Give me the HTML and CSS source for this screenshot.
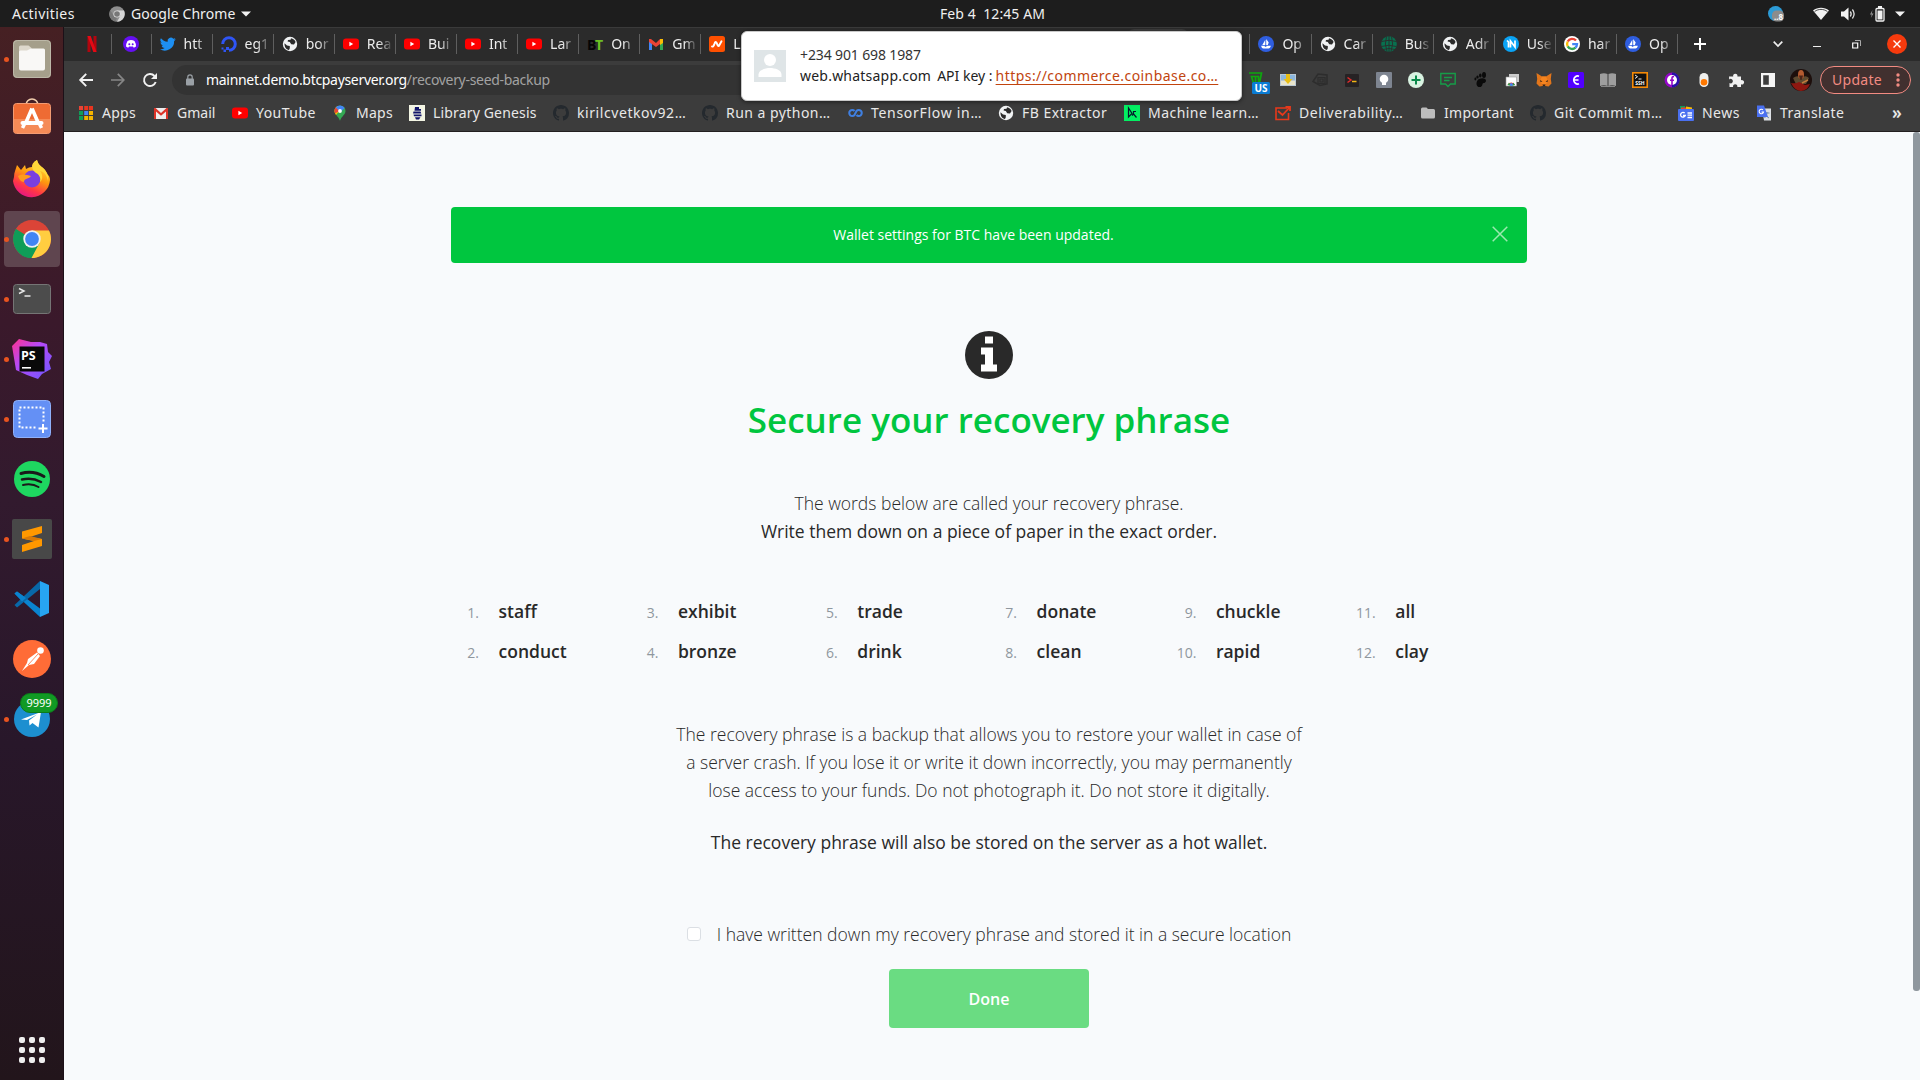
FILE: index.html
```html
<!DOCTYPE html>
<html lang="en">
<head>
<meta charset="utf-8">
<title>Secure your recovery phrase</title>
<link rel="stylesheet" href="styles.css">
</head>
<body>
<svg class="defs" width="0" height="0" aria-hidden="true">
  <symbol id="yt" viewBox="0 0 16 16"><rect y="2.5" width="16" height="11" rx="3" fill="#f00"/><path d="M6.4 5.8v4.4L10.2 8z" fill="#fff"/></symbol>
  <symbol id="globe" viewBox="0 0 16 16"><circle cx="8" cy="8" r="7.2" fill="#f1f3f4"/><path d="M2.5 7.2 5 9.4 7.8 10v2.2L7 14C4.300 13.600 2.300 11 2.500 7.200zM9 2.200c2 .3 3.900 1.700 4.600 3.800L12 8.600l-2.800-.4L7.800 6l-2.200-.4L6 4l2.600-.2z" fill="#2b2b2b"/></symbol>
  <symbol id="gh" viewBox="0 0 16 16"><path fill="#24292e" fill-rule="evenodd" d="M8 0C3.580 0 0 3.580 0 8c0 3.540 2.290 6.530 5.470 7.590.4.070.55-.17.55-.38 0-.19-.01-.82-.01-1.490-2.010.37-2.530-.49-2.690-.94-.09-.23-.48-.94-.82-1.130-.28-.15-.68-.52-.01-.53.63-.01 1.080.58 1.230.82.72 1.210 1.870.87 2.330.66.070-.52.28-.87.51-1.070-1.780-.2-3.640-.89-3.640-3.950 0-.87.31-1.590.82-2.150-.08-.2-.36-1.020.08-2.120 0 0 .67-.21 2.200.82.64-.18 1.320-.27 2-.27s1.360.09 2 .27c1.530-1.040 2.200-.82 2.200-.82.44 1.100.16 1.920.08 2.120.51.56.82 1.270.82 2.150 0 3.070-1.870 3.750-3.650 3.950.29.25.54.73.54 1.480 0 1.070-.01 1.930-.01 2.200 0 .21.15.46.55.38A8.010 8.010 0 0 0 16 8c0-4.420-3.580-8-8-8z"/></symbol>
  <symbol id="sea" viewBox="0 0 16 16"><circle cx="8" cy="8" r="8" fill="#2f5ee0"/><path d="M7.300 3.800v5.200H4.300zM8.200 3l2.500 3.600L9.800 9H8.200zM3.200 9.800h3.600v.9h1.600v-.9h4.400c-.4 1.900-1.200 2.700-2.300 2.700H5.300c-1.100 0-1.800-1-2.100-2.700z" fill="#fff"/></symbol>
  <symbol id="goo" viewBox="0 0 16 16"><circle cx="8" cy="8" r="8" fill="#fff"/><g fill="none" stroke-width="2.300"><path d="M12 4.600A5 5 0 0 0 3.700 5.600" stroke="#ea4335"/><path d="M3.700 5.600a5 5 0 0 0 0 4.800" stroke="#fbbc05"/><path d="M3.700 10.400A5 5 0 0 0 11.500 11.600" stroke="#34a853"/><path d="M11.400 11.700A5 5 0 0 0 13 8.200H8.200" stroke="#4285f4"/></g></symbol>
</svg>

<header class="topbar">
  <span class="activities">Activities</span>
  <span class="appmenu">
    <svg width="16" height="16" viewBox="0 0 16 16"><circle cx="8" cy="8" r="7.800" fill="#8d8d8d"/><path d="M8 4.500h7A8 8 0 0 1 8 15.800l3.400-6z" fill="#d4d4d4"/><path d="M1.200 4.200 5 10l3 1.500L6.500 15.600A8 8 0 0 1 1.200 4.200z" fill="#777"/><circle cx="8" cy="8" r="3.600" fill="#ddd"/><circle cx="8" cy="8" r="2.800" fill="#777"/></svg>
    <span class="t-chrome">Google Chrome</span>
    <svg width="10" height="6" viewBox="0 0 10 6"><path d="M0 .5h10L5 5.500z" fill="#f2f2f2"/></svg>
  </span>
  <span class="clock">Feb 4&nbsp; 12:45 AM</span>
  <span class="tray">
    <svg width="16" height="16" viewBox="0 0 16 16"><circle cx="7.500" cy="7.500" r="7.500" fill="#2c9bd6"/><rect x="4" y="4.500" width="12" height="11" rx="4.500" fill="#8c8c8c"/><text x="6" y="13.500" class="tiny">..8</text></svg>
    <svg class="wifi" width="16" height="13" viewBox="0 0 16 13"><path d="M0 3.500C4.500-.2 11.500-.2 16 3.500L8 13z" fill="#f2f2f2"/><path d="M1.600 4.500C5.500 1.700 10.500 1.700 14.400 4.500" stroke="#1d1d1d" stroke-width=".8" fill="none"/></svg>
    <svg class="vol" width="16" height="14" viewBox="0 0 16 14"><path d="M0 4.500h3L7.500.5v13L3 9.500H0z" fill="#f2f2f2"/><path d="M9.300 4.500q1.800 2.500 0 5M11.400 2.500q3.400 4.500 0 9" stroke="#ddd" stroke-width="1.300" fill="none"/></svg>
    <svg class="bat" width="16" height="16" viewBox="0 0 16 16"><path d="M3.500 4 1 8.500h1.800L1.800 12l2.700-4.500H2.700z" fill="#999"/><rect x="7" y="2.500" width="8" height="12.500" rx="1" fill="none" stroke="#f2f2f2" stroke-width="1.300"/><path d="M9 0h4v2H9zM8.500 4.500h5v9h-5z" fill="#f2f2f2"/></svg>
    <svg class="car" width="10" height="6" viewBox="0 0 10 6"><path d="M0 .5h10L5 5.500z" fill="#f2f2f2"/></svg>
  </span>
</header>

<div class="desktop">
  <nav class="dock">
    <div class="app run"><svg viewBox="0 0 40 40"><rect x="1" y="1" width="38" height="38" rx="4" fill="#a59f8b"/><rect x="1.500" y="1.500" width="37" height="37" rx="4" fill="none" stroke="#bdb8a8"/><path d="M7 8q0-1.500 1.500-1.500h8L19.500 9V18H7z" fill="#ddd8cc"/><path d="M7 13q0-1.500 1.500-1.500H15L19 9.500h12.500Q33 9.500 33 11v18.500q0 2-2 2H9q-2 0-2-2z" fill="#f9f8f6"/></svg></div>
    <div class="app"><svg viewBox="0 0 40 40"><path d="M14 6a6 6 0 0 1 12 0" fill="none" stroke="#f2cfae" stroke-width="1.600"/><rect x="1.500" y="4.500" width="37" height="30" rx="3" fill="#ee6b33" stroke="#f39b72"/><path d="M2 20h36v12q0 2-2 2H4q-2 0-2-2z" fill="#f58b57"/><path d="M20 9.500l-6.500 15M20 9.500l6.500 15" stroke="#fff" stroke-width="3.600" fill="none"/><rect x="8.500" y="22" width="23" height="4" rx="2" fill="#fff"/><path d="M12.500 25 10.500 29M27.500 25l2 4" stroke="#fff" stroke-width="3.500"/></svg></div>
    <div class="app"><svg viewBox="0 0 40 40"><defs><linearGradient id="ff" x1=".8" y1="0" x2=".3" y2="1"><stop offset="0" stop-color="#fff14a"/><stop offset=".45" stop-color="#ff980e"/><stop offset=".75" stop-color="#ff3647"/><stop offset="1" stop-color="#e31587"/></linearGradient></defs><path d="M2 18C2 13 4 10 5 6l4 5 4-5 1 4q3-2 6-2c0-4 3-6 5-7l2 6c5 1 7 5 8 8q3 2 3 6A18.600 18.600 0 0 1 1 22z" fill="url(#ff)"/><circle cx="20" cy="20" r="8.500" fill="#7a3fe0"/><path d="M6 17c5-3 9-1 13 0-2 3-7 2-7 6-3 0-5-3-6-6z" fill="#ff9a1c"/><path d="M25 1c-7 5-5 10-1 13 4 2 5 6 4 9 3-2 3-8 0-11 5 1 7 5 8 10 2-12-9-13-11-21z" fill="#ffd83a"/></svg></div>
    <div class="app run active"><svg viewBox="0 0 40 40"><circle cx="20" cy="20" r="19" fill="#db4437"/><path d="M4 10a19 19 0 0 0 15.500 29L28 25z" fill="#0f9d58"/><path d="M4 10 13 25h14L19.500 39C5 39-3 23 4 10z" fill="#0f9d58"/><path d="M20 11.500h17A19 19 0 0 1 19.500 39L27.500 24z" fill="#ffcd40"/><circle cx="20" cy="20" r="8.700" fill="#f1f1f1"/><circle cx="20" cy="20" r="6.900" fill="#4285f4"/></svg></div>
    <div class="app run"><svg viewBox="0 0 40 40"><rect x="1.500" y="5.500" width="37" height="29" rx="3" fill="#4c4c4c" stroke="#757575"/><path d="M7 9.500l5 2.500-5 2.500M12.500 17h6" stroke="#e6e6e6" stroke-width="1.500" fill="none"/></svg></div>
    <div class="app run"><svg viewBox="0 0 40 40"><defs><linearGradient id="ps" x1="0" y1="0" x2="1" y2="1"><stop offset="0" stop-color="#ff318c"/><stop offset=".4" stop-color="#b74af7"/><stop offset="1" stop-color="#6b57ff"/></linearGradient></defs><path d="M0 7 7 0l12 3h9l7 2 1 8 4 4-3 6 2 7-9 5-4 5-11-4-11-5z" fill="url(#ps)"/><rect x="7.500" y="7.500" width="25" height="25" fill="#090909"/><text x="9" y="20.500" class="pstext">PS</text><path d="M10 28h9v1.600h-9z" fill="#fff"/></svg></div>
    <div class="app run"><svg viewBox="0 0 40 40"><rect x="1.500" y="1.500" width="37" height="37" rx="4" fill="#6490f5" stroke="#8fb0fa"/><rect x="7.500" y="8.500" width="24" height="20" fill="none" stroke="#fff" stroke-width="2" stroke-dasharray="2 2"/><path d="M25 23h8v8h-8z" fill="#6490f5"/><path d="M31 25v9M26.500 29.500h9" stroke="#fff" stroke-width="2"/></svg></div>
    <div class="app"><svg viewBox="0 0 40 40"><circle cx="20" cy="20" r="18" fill="#1ed760"/><g fill="none" stroke="#1a1a1a" stroke-linecap="round"><path d="M9 14.500q12-3.500 23 3" stroke-width="3"/><path d="M10 20.500q10-2.500 19 2.500" stroke-width="2.500"/><path d="M11 26q9-2 15.500 2" stroke-width="2"/></g></svg></div>
    <div class="app run"><svg viewBox="0 0 40 40"><rect width="40" height="40" rx="2" fill="#484848"/><path d="M10 12.500 30 7v7l-12 4 12 2v7L10 33v-7l12-4-12-2.500z" fill="#ff9800"/><path d="M10 19.500 22 22l8-2-12-3z" fill="#d97a06"/></svg></div>
    <div class="app"><svg viewBox="0 0 40 40"><path d="M2.500 14.500 5 12.500l23 17V38z" fill="#0a84d0"/><path d="M2.500 26 28 2v8L5 28.500z" fill="#0868a8"/><path d="M2.500 14.500 5 12.500l9 6.500-4 3.500z" fill="#0a84d0"/><path d="M28 2l9 4v28l-9 4z" fill="#27a5f2"/></svg></div>
    <div class="app"><svg viewBox="0 0 40 40"><circle cx="20" cy="20" r="19" fill="#ff6c37"/><circle cx="28.500" cy="11.500" r="3.300" fill="#fff"/><path d="M25 13.500 28 17l-6 8-5 1-7 6 5-8 1-4z" fill="#fff"/><path d="m26 15-10 11" stroke="#ff6c37" stroke-width=".8"/></svg></div>
    <div class="app run"><svg viewBox="0 0 40 40"><circle cx="20" cy="20" r="18" fill="#1d8fd0"/><path d="M9 20.500 29 13l-2.500 15.500-6-4.500-3 2.500-.5-5 8-6-10 5.500z" fill="#fff"/></svg><span class="badge">9999</span></div>
    <div class="grid9"><svg width="26" height="26" viewBox="0 0 26 26" fill="#eee"><rect x="0" y="0" width="6" height="6" rx="2"/><rect x="10" y="0" width="6" height="6" rx="2"/><rect x="20" y="0" width="6" height="6" rx="2"/><rect x="0" y="10" width="6" height="6" rx="2"/><rect x="10" y="10" width="6" height="6" rx="2"/><rect x="20" y="10" width="6" height="6" rx="2"/><rect x="0" y="20" width="6" height="6" rx="2"/><rect x="10" y="20" width="6" height="6" rx="2"/><rect x="20" y="20" width="6" height="6" rx="2"/></svg></div>
  </nav>

  <main class="browser">
    <div class="tabs">
      <div class="tab pin first"><svg class="ic" viewBox="0 0 16 16"><path d="M3.500 0h3v16h-3zM9.500 0h3v16h-3z" fill="#b1060f"/><path d="M3.500 0h3.200l5.800 16H9.300z" fill="#e50914"/></svg></div>
      <div class="tab pin"><svg class="ic" viewBox="0 0 16 16"><circle cx="8" cy="8" r="8" fill="#6610f2"/><path d="M4.500 5q3.500-1.800 7 0 1.600 2.500 1.500 5.500l-2.200 1.300-.8-1.300H6l-.8 1.300L3 10.500Q3 7.500 4.500 5z" fill="#fff"/><circle cx="6.300" cy="8.200" r="1" fill="#6610f2"/><circle cx="9.700" cy="8.200" r="1" fill="#6610f2"/></svg></div>
      <div class="tab"><svg class="ic twitter" viewBox="0 0 24 24"><path fill="#1d8ff2" d="M23.600 4.900c-.9.400-1.800.7-2.800.8 1-.6 1.800-1.600 2.200-2.700-1 .6-2 1-3.100 1.200a4.900 4.900 0 0 0-8.400 4.500C7.400 8.500 3.800 6.500 1.400 3.500a4.900 4.900 0 0 0 1.500 6.600c-.8 0-1.600-.2-2.200-.6 0 2.300 1.600 4.400 3.900 4.900-.7.200-1.500.2-2.200.1.600 2 2.400 3.400 4.600 3.400A9.900 9.900 0 0 1 0 19.900 14 14 0 0 0 21.200 7.400c1-.7 1.800-1.500 2.400-2.500z"/></svg><span>htt</span></div>
      <div class="tab"><svg class="ic" viewBox="0 0 16 16"><path d="M8 14.300A6.300 6.300 0 1 0 1.700 8" fill="none" stroke="#2f55f5" stroke-width="3"/><path d="M5 11h3v3H5zM2.500 13.500H5V16H2.500zM.5 11.500h2v2h-2z" fill="#2f55f5"/></svg><span>eg1</span></div>
      <div class="tab"><svg class="ic"><use href="#globe"/></svg><span>bor</span></div>
      <div class="tab"><svg class="ic"><use href="#yt"/></svg><span>Rea</span></div>
      <div class="tab"><svg class="ic"><use href="#yt"/></svg><span>Bui</span></div>
      <div class="tab"><svg class="ic"><use href="#yt"/></svg><span>Int</span></div>
      <div class="tab"><svg class="ic"><use href="#yt"/></svg><span>Lar</span></div>
      <div class="tab"><svg class="ic" viewBox="0 0 16 16"><text x="0" y="13.500" class="bt"><tspan fill="#050505">B</tspan><tspan fill="#6cc024" x="8">T</tspan></text></svg><span>On</span></div>
      <div class="tab"><svg class="ic" viewBox="0 0 16 16"><path d="M1 4h3v10H1z" fill="#4285f4"/><path d="M12 4h3v10h-3z" fill="#34a853"/><path d="M12 3h3v4l-3 2z" fill="#fbbc04"/><path d="M1 3h2l5 4 4-4v5l-4 3-7-5z" fill="#ea4335"/></svg><span>Gm</span></div>
      <div class="tab"><svg class="ic" viewBox="0 0 16 16"><rect width="16" height="16" rx="2.500" fill="#ff5000"/><path d="M3 10.500q1 .5 2-1.500l1-2.500q.6-1 1.400 0l1.400 3q.8 1.200 1.500-.2l2.200-4" fill="none" stroke="#fff" stroke-width="1.900" stroke-linecap="round"/></svg><span>L</span></div>
      <div class="behind"><i></i></div>
      <div class="tab"><svg class="ic"><use href="#sea"/></svg><span>Op</span></div>
      <div class="tab"><svg class="ic"><use href="#globe"/></svg><span>Car</span></div>
      <div class="tab"><svg class="ic" viewBox="0 0 16 16"><circle cx="8" cy="8" r="7.800" fill="#08704f"/><path d="M.5 5.500q7.500-2.500 15 0M.3 10.500q7.500-2.500 15 0M2 13.500q6-2 12 0M5.500.5q-2.500 7.500.5 15M10.500.5q2.500 7.500-.5 15M8 0v16" stroke="#2b2b2b" stroke-width=".9" fill="none"/></svg><span>Bus</span></div>
      <div class="tab"><svg class="ic"><use href="#globe"/></svg><span>Adr</span></div>
      <div class="tab"><svg class="ic" viewBox="0 0 16 16"><circle cx="8" cy="8" r="8" fill="#0aa3f5"/><path d="M4 4.500 5.500 6v5.500M7.500 11.500V5l4.500 6V4.500" fill="none" stroke="#fff" stroke-width="1.700"/></svg><span>Use</span></div>
      <div class="tab"><svg class="ic"><use href="#goo"/></svg><span>har</span></div>
      <div class="tab"><svg class="ic"><use href="#sea"/></svg><span>Op</span></div>
      <div class="newtab"><svg width="12" height="12" viewBox="0 0 12 12"><path d="M6 0v12M0 6h12" stroke="#fff" stroke-width="2"/></svg></div>
      <div class="winctl">
        <svg width="10" height="6" viewBox="0 0 10 6"><path d="M.7.7 5 5 9.300.7" stroke="#eee" stroke-width="1.700" fill="none"/></svg>
        <svg class="min" width="8" height="8" viewBox="0 0 8 8"><path d="M0 6.500h8" stroke="#eee" stroke-width="1"/></svg>
        <svg class="max" width="9" height="9" viewBox="0 0 9 9"><path d="M.7 3h5v5h-5z" stroke="#fff" stroke-width="1.200" fill="none"/><path d="M3 .5h5.500V6" stroke="#aaa" fill="none"/></svg>
        <svg class="cls" width="20" height="20" viewBox="0 0 20 20"><circle cx="10" cy="10" r="10" fill="#f63a0d"/><path d="m6.500 6.500 7 7m0-7-7 7" stroke="#fff" stroke-width="1.400"/></svg>
      </div>
    </div>

    <div class="toolbar">
      <svg class="back" width="14" height="14" viewBox="0 0 14 14"><path d="M14 7H1.500M7.200.8 1.200 7l6 6.200" stroke="#f1f1f1" stroke-width="1.900" fill="none"/></svg>
      <svg class="fwd" width="14" height="14" viewBox="0 0 14 14"><path d="M0 7h12.500M6.800.8 12.800 7l-6 6.200" stroke="#868686" stroke-width="1.700" fill="none"/></svg>
      <svg class="rel" width="14" height="14" viewBox="0 0 14 14"><path d="M12.700 9A6 6 0 1 1 11.500 3" stroke="#f1f1f1" stroke-width="1.900" fill="none"/><path d="M14 0v6H8z" fill="#f1f1f1"/></svg>
      <div class="omni">
        <svg width="8" height="12" viewBox="0 0 8 12"><rect y="4.500" width="8" height="7" rx="1" fill="#9aa0a6"/><path d="M1.800 5V3a2.200 2.200 0 0 1 4.400 0v2" stroke="#9aa0a6" stroke-width="1.200" fill="none"/></svg>
        <span class="host">mainnet.demo.btcpayserver.org</span><span class="path">/recovery-seed-backup</span>
      </div>
      <div class="exts">
        <svg class="ic us" viewBox="0 0 16 16"><path d="M1 1h12.500l-2 10H5.500L3.500 4.500h7V10M7.500 4.500V10" fill="none" stroke="#0da80d" stroke-width="1.700"/><rect x="4" y="10" width="18" height="12" rx="1.500" fill="#0a7cd4"/><text x="6.500" y="20" class="ustext">US</text></svg>
        <svg class="ic" viewBox="0 0 16 16"><rect y="2" width="16" height="12" fill="#b9c8d4"/><rect x="1" y="3" width="14" height="5" fill="#8bb6dc"/><path d="M1 9h14v4H1z" fill="#e8e4cc"/><path d="M6 2h4v5h2.500L8 12 3.500 7H6z" fill="#e7bd15"/></svg>
        <svg class="ic" viewBox="0 0 16 16"><path d="M1 9.500 6 2l9 1v9l-7 1.500z" fill="none" stroke="#2d2d2d" stroke-width="1.500"/><path d="M6 5.500h7v6H6zM8 7h3v3H8z" fill="none" stroke="#2d2d2d" stroke-width="1.200"/></svg>
        <svg class="ic" viewBox="0 0 16 16"><rect x="1" y="2" width="14" height="13" rx="1" fill="#262224"/><path d="m3.500 5.500 3.500 2.500-3.500 2.500" stroke="#e22b2b" stroke-width="1.500" fill="none"/><path d="M8 9.500h4.500" stroke="#f2b515" stroke-width="1.500"/></svg>
        <svg class="ic" viewBox="0 0 16 16"><rect width="16" height="16" rx="1" fill="#7e8591"/><circle cx="8" cy="7" r="4.300" fill="#fff"/><path d="M6 10h4v3H6z" fill="#fff"/></svg>
        <svg class="ic" viewBox="0 0 16 16"><circle cx="8" cy="8" r="8" fill="#d9f3e2"/><path d="M8 3.500v9M3.500 8h9" stroke="#0b8a4b" stroke-width="2"/></svg>
        <svg class="ic" viewBox="0 0 16 16"><path d="M.8 1.500h14.400v10.500H10.500L8 14.500 5.500 12H.8z" fill="none" stroke="#169c48" stroke-width="1.400"/><path d="M4 5.500h8M4 8.500h5.500" stroke="#169c48" stroke-width="1.300"/></svg>
        <svg class="ic" viewBox="0 0 16 16" fill="#0a0a0a"><path d="M7 7c4-1.500 7-.5 7 2-.5 2.500-3 1.500-3.500 3 0 3-3 3.800-4.800 2.500C4 13 4 9 7 7z"/><ellipse cx="12" cy="3" rx="2" ry="3"/><ellipse cx="8.300" cy="3.500" rx="1.300" ry="2"/><ellipse cx="5.500" cy="5" rx="1.200" ry="1.600"/><ellipse cx="3.400" cy="7" rx="1" ry="1.400"/></svg>
        <svg class="ic" viewBox="0 0 16 16"><path d="M5 2h10v8H5z" fill="#ccc"/><path d="M2 5h10.500v9H2z" fill="#fff" stroke="#999" stroke-width=".6"/><path d="M3.500 13a4 4 0 0 1 7.500 0z" fill="#e8342a"/><path d="M3.500 13 5 10.500 7 14zM11 13 9.500 10.500 8 14z" fill="#2a9b48"/><circle cx="7.300" cy="12.500" r="1.500" fill="#4285f4"/></svg>
        <svg class="ic" viewBox="0 0 16 16"><path d="M.5 1 6 4.500h4L15.500 1l-.7 6 .7 4.500-3 3-3-.5h-3l-3 .5-3-3L1.200 7z" fill="#e2761b"/><path d="M6 4.500h4L12 9l-2 3H6L4 9z" fill="#f5841f"/><path d="m4 8 2.500 1.500L4.500 10zM12 8 9.500 9.500l2 .5zM6.500 12.500h3L9 14H7z" fill="#3a2618"/></svg>
        <svg class="ic" viewBox="0 0 16 16"><rect width="16" height="16" rx="1.500" fill="#5200ff"/><path d="M11 4.200A4 4 0 1 0 11 11.800M5 8h5.500" fill="none" stroke="#fff" stroke-width="1.700"/></svg>
        <svg class="ic" viewBox="0 0 16 16"><path d="M0 2q4-1.500 7.500 0v12Q4 12.500 0 14zM16 2q-4-1.500-7.500 0v12q3.500-1.500 7.500 0z" fill="#9e9e9e"/><path d="M1 14.500h14" stroke="#888"/></svg>
        <svg class="ic" viewBox="0 0 16 16"><rect x=".8" y=".8" width="14.400" height="14.400" fill="#111" stroke="#f58a07" stroke-width="1.600"/><path d="m3 3 2.500 1.700L3 6.500M6.500 7h3" stroke="#eee" fill="none"/><text x="3.300" y="13" class="ssh">SSH</text></svg>
        <svg class="ic" viewBox="0 0 16 16"><circle cx="8" cy="8" r="7.500" fill="#9407c8"/><path d="M8 .5a7.500 7.500 0 0 1 0 15z" fill="#2711a8"/><circle cx="8" cy="8" r="5" fill="#fff"/><path d="M10 4.800q-2-.6-2 1.500V13M6 8.300h4" stroke="#9407c8" stroke-width="1.600" fill="none"/></svg>
        <svg class="ic" viewBox="0 0 16 16"><rect x="3.500" y="1" width="9" height="14" rx="4.500" fill="#f0f0ee"/><circle cx="8" cy="10.300" r="3.300" fill="#ff7800"/></svg>
        <svg class="ic" viewBox="0 0 16 16"><path d="M1 4.500h4.200a2.200 2.200 0 1 1 4.200 0H13v3.800a2.200 2.200 0 1 1 0 4V15H9.300a2.200 2.200 0 1 0-4.200 0H1.500v-4a2.200 2.200 0 1 0-.3-3.500z" fill="#f1f1f1"/></svg>
        <svg class="ic" viewBox="0 0 16 16"><path d="M1 1h14v14H1zM3.200 3.200v9.600h5.600V3.200z" fill="#f5f5f5" fill-rule="evenodd"/></svg>
      </div>
      <svg class="ava" width="22" height="22" viewBox="0 0 22 22"><circle cx="11" cy="11" r="11" fill="#1d0f0c"/><path d="M3 9q4-3 6-1l2 3 2-3q3-2 6 1l-3 6H6z" fill="#5d4a30"/><ellipse cx="11" cy="5.500" rx="3" ry="4.500" fill="#b35a30"/><path d="M1 14q5 1 8-1l6 3 5-1q-3 7-9 7t-10-8z" fill="#8e1710"/><path d="M9 6.500h4l-1 4h-2z" fill="#4a2418"/><path d="m12 14 6-3" stroke="#c07a3c" stroke-width="1.500"/></svg>
      <div class="update"><span>Update</span><svg width="4" height="14" viewBox="0 0 4 14" fill="#f28b82"><circle cx="2" cy="2" r="1.700"/><circle cx="2" cy="7" r="1.700"/><circle cx="2" cy="12" r="1.700"/></svg></div>
    </div>

    <div class="marks">
      <a><svg class="ic" viewBox="0 0 16 16"><path d="M1 1h4v4H1z" fill="#ea4335"/><path d="M6.200 1h4v4h-4zM11 1h4v4h-4z" fill="#e8351f"/><path d="M1 6h4v4H1z" fill="#0f9d58"/><path d="M6.200 6h4v4h-4z" fill="#4285f4"/><path d="M11 6h4v4h-4z" fill="#f4b400"/><path d="M1 11h4v4H1z" fill="#0f9d58"/><path d="M6.200 11h4v4h-4zM11 11h4v4h-4z" fill="#f4b400"/></svg><span class="w3">Apps</span></a>
      <a><svg class="ic" viewBox="0 0 16 16"><path d="M1 3h14v11H1z" fill="#eee"/><path d="M1 3h1.500L8 8l5.500-5H15v11h-2V6.500l-5 4.300-5-4.300V14H1z" fill="#dc3429"/></svg><span>Gmail</span></a>
      <a><svg class="ic"><use href="#yt"/></svg><span class="w5">YouTube</span></a>
      <a><svg class="ic" viewBox="0 0 16 16"><path d="M8 .5a5.500 5.500 0 0 1 5.500 5.500c0 4-4 5-5.500 9.800C6.500 11 2.500 10 2.500 6A5.500 5.500 0 0 1 8 .5z" fill="#34a853"/><path d="M2.500 6c0 1.500.7 2.800 1.500 4l6-7.200L6 1A5.500 5.500 0 0 0 2.500 6z" fill="#fbbc04"/><path d="M8 6 3.800 2.500A5.500 5.500 0 0 0 3 8.300z" fill="#ea4335"/><path d="M3.800 2.500A5.500 5.500 0 0 1 12.700 3L8.500 7z" fill="#4285f4"/><circle cx="8" cy="6" r="1.900" fill="#fff"/></svg><span class="w3">Maps</span></a>
      <a><svg class="ic" viewBox="0 0 16 16"><path d="M0 0h16v16H0z" fill="#f3f5e4"/><path d="M6 2h4v2h2v1.800H5.500zM4.500 6.500h7l.8 2H4zM4.500 9.500h8v1.800H5zM6 12.300h5.500L10 14.500H7z" fill="#12156b"/></svg><span class="w1">Library Genesis</span></a>
      <a><svg class="ic"><use href="#gh"/></svg><span class="w6">kirilcvetkov92…</span></a>
      <a><svg class="ic"><use href="#gh"/></svg><span class="w5">Run a python…</span></a>
      <a><svg class="ic" viewBox="0 0 16 16"><path d="M7.500 6A3 3 0 1 0 7.500 10L9.500 6A3 3 0 1 1 9.500 10" fill="none" stroke="#3f7fe0" stroke-width="2.100"/></svg><span class="w7">TensorFlow in…</span></a>
      <a><svg class="ic"><use href="#globe"/></svg><span class="w5">FB Extractor</span></a>
      <a><svg class="ic" viewBox="0 0 16 16"><path d="M0 0h16v16H0z" fill="#03ef62"/><path d="M4.500 3v9L8 8.500zM12 6.500H9.500V9l3 3.500M9.500 9 8 10.500" fill="none" stroke="#05192d" stroke-width="1.200"/></svg><span class="w5">Machine learn…</span></a>
      <a><svg class="ic" viewBox="0 0 16 16"><path d="M12 3H1v11.500h12.500V8" fill="none" stroke="#e8391b" stroke-width="1.600"/><path d="m3 6 4.500 4L14 3M10.500 2H15v4" fill="none" stroke="#e8391b" stroke-width="1.800"/></svg><span class="w6">Deliverability…</span></a>
      <a><svg class="ic" viewBox="0 0 16 16"><path d="M1 4q0-1.500 1.500-1.500h4L8 4h5.500Q15 4 15 5.500V12q0 1.500-1.500 1.500h-11Q1 13.500 1 12z" fill="#bdbdbd"/></svg><span class="w3">Important</span></a>
      <a><svg class="ic"><use href="#gh"/></svg><span class="w5">Git Commit m…</span></a>
      <a><svg class="ic" viewBox="0 0 16 16"><path d="M2 1h5v5H2z" fill="#0c9d58"/><path d="M3 2.500h8V6H3z" fill="#ea4335"/><path d="M8 1.500l6 1V6H8z" fill="#fbbc04"/><rect y="4" width="16" height="12" rx="1" fill="#4a70f0"/><path d="M6.700 8A2.400 2.400 0 1 0 7.300 10.500H5M9.500 8h4.500M9.500 10.200h4.500M9.500 12.500h4.500" stroke="#fff" stroke-width="1.300" fill="none"/></svg><span class="w5">News</span></a>
      <a><svg class="ic" viewBox="0 0 16 16"><path d="M6 3.500h9v12H8z" fill="#dcdfe4"/><path d="M8.500 8h5M11 7v1q0 3-2.500 5M9.500 9q1 3 3.500 4" stroke="#6d8ba8" fill="none"/><path d="M1 .5h7L12 12H1z" fill="#4a70f0"/><path d="M7 5A2.200 2.200 0 1 0 7.500 7H5.500" stroke="#fff" stroke-width="1.100" fill="none"/></svg><span class="w5">Translate</span></a>
      <b>»</b>
    </div>

    <section class="page">
      <div class="content">
        <div class="alert"><span>Wallet settings for BTC have been updated.</span><svg width="16" height="16" viewBox="0 0 16 16"><path d="m.7.700 14.600 14.600M15.300.7.7 15.300" stroke="#9be9b0" stroke-width="1.500"/></svg></div>
        <svg class="info" width="48" height="48" viewBox="0 0 48 48"><circle cx="24" cy="24" r="24" fill="#292929"/><path d="M20 5.500h8v7h-8zM16 16.500h12v17h4v7H16v-7h4v-10h-4z" fill="#fff"/></svg>
        <h1>Secure your recovery phrase</h1>
        <p class="lead">The words below are called your recovery phrase.<br><strong>Write them down on a piece of paper in the exact order.</strong></p>
        <ol class="words">
          <li><i>1.</i>staff</li><li><i>2.</i>conduct</li>
          <li><i>3.</i>exhibit</li><li><i>4.</i>bronze</li>
          <li><i>5.</i>trade</li><li><i>6.</i>drink</li>
          <li><i>7.</i>donate</li><li><i>8.</i>clean</li>
          <li><i>9.</i>chuckle</li><li><i>10.</i>rapid</li>
          <li><i>11.</i>all</li><li><i>12.</i>clay</li>
        </ol>
        <p class="warn">The recovery phrase is a backup that allows you to restore your wallet in case of<br>a server crash. If you lose it or write it down incorrectly, you may permanently<br>lose access to your funds. Do not photograph it. Do not store it digitally.</p>
        <p class="hot"><strong>The recovery phrase will also be stored on the server as a hot wallet.</strong></p>
        <label class="confirm"><span class="box"></span>I have written down my recovery phrase and stored it in a secure location</label>
        <button class="done">Done</button>
      </div>
      <div class="scroll"><i></i></div>
    </section>
  </main>
</div>

<aside class="toast">
  <svg width="32" height="32" viewBox="0 0 32 32"><path d="M0 0h32v32H0z" fill="#dfe5e7"/><circle cx="16" cy="10" r="6" fill="#fff"/><path d="M4.500 27v-2.500C4.500 20 11 18 16 18s11.500 2 11.500 6.500V27z" fill="#fff"/></svg>
  <div><p class="who">+234 901 698 1987</p><p class="msg"><span class="m1">web.whatsapp.com</span><span class="m2">API key :</span><u>https://commerce.coinbase.co…</u></p></div>
</aside>
</body>
</html>
```

FILE: styles.css
```css
* { box-sizing: border-box; }
body { margin: 0; width: 1920px; height: 1080px; overflow: hidden; display: flex; flex-direction: column; background: #1d1d1d; font: 14px/18px "Noto Sans", sans-serif; color: #e8e8e8; }
svg { display: block; flex: none; overflow: visible; }
.defs { position: absolute; }
p, h1, ol { margin: 0; padding: 0; }
.ic { width: 16px; height: 16px; }

.topbar { height: 27px; flex: none; display: grid; grid-template-columns: 109px 831px 1fr auto; align-items: center; background: #1d1d1d; color: #f0f0f0; white-space: nowrap; }
.activities { padding-left: 12px; letter-spacing: .45px; }
.clock { letter-spacing: .08px; }
.appmenu { display: flex; align-items: center; gap: 6px; }
.t-chrome { letter-spacing: .08px; }
.tray { display: flex; align-items: center; padding-right: 15px; }
.wifi { margin-left: 29px; }
.vol { margin-left: 12px; }
.bat { margin-left: 12px; }
.car { margin-left: 10px; }
.tiny { font: 700 8px "Noto Sans", sans-serif; fill: #fff; }

.desktop { flex: 1; display: flex; min-height: 0; }
.dock { width: 64px; flex: none; padding-top: 2px; display: flex; flex-direction: column; background: linear-gradient(#462023, #3a192b 28%, #321a2e 45%, #28172a 68%, #22151b 100%); border-right: 1px solid #1c1018; }
.app { height: 60px; flex: none; display: flex; align-items: center; justify-content: center; position: relative; }
.app svg { width: 40px; height: 40px; }
.app.run::before { content: ""; position: absolute; left: 4px; width: 5px; height: 5px; border-radius: 50%; background: #e95420; }
.app.active { margin: 2px 3px 2px 4px; height: 56px; border-radius: 4px; background: #5f454f; }
.app.active.run::before { left: 0; }
.badge { position: absolute; left: 20px; top: 4px; width: 38px; height: 20px; border-radius: 10px; background: #119a24; border: 1px solid #0c7c1b; color: #fff; font: 11px/18px "Noto Sans", sans-serif; text-align: center; }
.pstext { font: 700 12.500px "Open Sans", sans-serif; fill: #fff; }
.grid9 { margin-top: auto; padding: 0 0 17px 19px; }

.browser { flex: 1; min-width: 0; display: flex; flex-direction: column; }
.tabs { height: 34px; flex: none; display: flex; align-items: center; background: #2b2b2b; border-top: 1px solid #3a3a3a; padding-bottom: 1px; }
.tab { width: 61.100px; height: 20px; flex: none; display: flex; align-items: center; gap: 8px; padding-left: 8px; border-left: 1px solid #5f5f5f; }
.tab span { white-space: nowrap; color: #ececec; mask-image: linear-gradient(90deg, #000 12px, rgba(0,0,0,.15) 24px); }
.tab.pin { width: 39.500px; padding-left: 11px; }
.tab.first { width: 47px; padding-left: 20px; border-left: 0; }
.behind { width: 488px; flex: none; align-self: stretch; padding: 1px 61px 0 0; display: flex; justify-content: flex-end; }
.behind i { width: 60px; background: #3c3c3c; border-radius: 6px 6px 0 0; }
.newtab { height: 20px; border-left: 1px solid #5f5f5f; padding: 4px 0 0 16px; }
.winctl { margin-left: auto; padding-right: 13px; display: flex; align-items: center; }
.min { margin-left: 30px; }
.max { margin-left: 31px; }
.cls { margin-left: 26px; }
.bt { font: 700 14px "Open Sans", sans-serif; }

.toolbar { height: 34px; flex: none; background: #3c3c3c; display: flex; align-items: center; padding: 4px 9px 0 15px; }
.back, .fwd, .rel { margin-top: -1px; }
.fwd { margin-left: 18px; }
.rel { margin-left: 18px; }
.omni { margin-left: 15px; width: 1064px; height: 30px; flex: none; border-radius: 15px; background: #333; padding-left: 14px; display: flex; align-items: center; white-space: nowrap; letter-spacing: -.31px; }
.host { margin-left: 12px; color: #fff; }
.path { color: #a2a2a2; }
.exts { margin-left: 12px; display: flex; gap: 16px; }
.ustext { font: 700 10px "Open Sans", sans-serif; fill: #fff; }
.ssh { font: 700 5px "Open Sans", sans-serif; fill: #fff; }
.ava { margin-left: 14px; }
.update { margin-left: auto; width: 91px; height: 28px; border: 1px solid #f28b82; border-radius: 14px; background: #41302f; color: #f28b82; display: flex; align-items: center; justify-content: space-between; padding: 0 10px 0 11px; letter-spacing: .3px; }

.marks { height: 37px; flex: none; background: #3c3c3c; border-bottom: 1px solid #231f20; padding-left: 14px; display: grid; grid-template-columns: 75px 79px 100px 77px 144px 149px 145px 151px 126px 151px 145px 110px 148px 78px 136px auto; align-items: center; white-space: nowrap; }
.marks a { display: flex; align-items: center; gap: 8px; }
.marks b { font-size: 17px; font-weight: 600; line-height: 16px; }
.w1 { letter-spacing: .16px; }
.w3 { letter-spacing: .28px; }
.w5 { letter-spacing: .46px; }
.w6 { letter-spacing: .57px; }
.w7 { letter-spacing: .7px; }

.page { flex: 1; min-height: 0; display: flex; background: #f8fafc; font-family: "Open Sans", sans-serif; color: #292929; }
.content { flex: 1; padding: 75px 386px 0 387px; display: flex; flex-direction: column; align-items: center; }
.scroll { width: 7px; flex: none; }
.scroll i { display: block; height: 859px; background: #8f979e; border-radius: 3px; }
.alert { align-self: stretch; height: 56px; flex: none; border-radius: 4px; background: #00c63f; color: #fff; display: flex; align-items: center; padding: 0 19px 0 16px; font-size: 14px; }
.alert span { flex: 1; text-align: center; padding-right: 12px; }
.alert svg { margin-top: -2px; }
.info { margin-top: 68px; }
h1 { margin-top: 20px; font-size: 35px; line-height: 42px; font-weight: 600; color: #00c63f; }
.lead, .warn, .hot, .confirm { font-size: 17.500px; line-height: 28px; font-weight: 300; text-align: center; white-space: nowrap; }
.page strong { font-weight: 400; }
.lead { margin-top: 48px; }
.words { align-self: stretch; margin-top: 46px; display: grid; grid-auto-flow: column; grid-template-rows: 40px 40px; grid-auto-columns: 16.6667%; list-style: none; font-size: 17.500px; line-height: 40px; font-weight: 600; }
.words li { display: flex; align-items: baseline; }
.words i { width: 28px; margin-right: 19.600px; text-align: right; font: 400 14px "Open Sans", sans-serif; color: #8f979e; }
.warn { margin-top: 49px; }
.hot { margin-top: 24px; }
.confirm { margin-top: 64px; display: flex; align-items: center; }
.box { width: 14px; height: 14px; border: 1px solid #dbdfe4; border-radius: 3px; background: #fff; margin-right: 16px; }
.done { margin-top: 21px; width: 200px; height: 59px; flex: none; border: 0; border-radius: 4px; background: #6adc82; color: #fff; font: 600 16px "Open Sans", sans-serif; }

.toast { position: absolute; left: 741px; top: 31px; width: 501px; height: 70px; border-radius: 6px; background: #fff; border: 1px solid #c9c9c9; box-shadow: 0 1px 4px rgba(0,0,0,.5); display: flex; align-items: center; gap: 14px; padding-left: 12px; color: #333; white-space: nowrap; line-height: 21px; }
.toast > div { margin-top: -2px; }
.who { letter-spacing: -.13px; }
.msg { display: flex; color: #222; }
.m1 { letter-spacing: .22px; }
.m2 { margin: 0 3px 0 6px; }
.msg u { color: #c1440e; text-underline-offset: 3px; letter-spacing: .44px; }
```
